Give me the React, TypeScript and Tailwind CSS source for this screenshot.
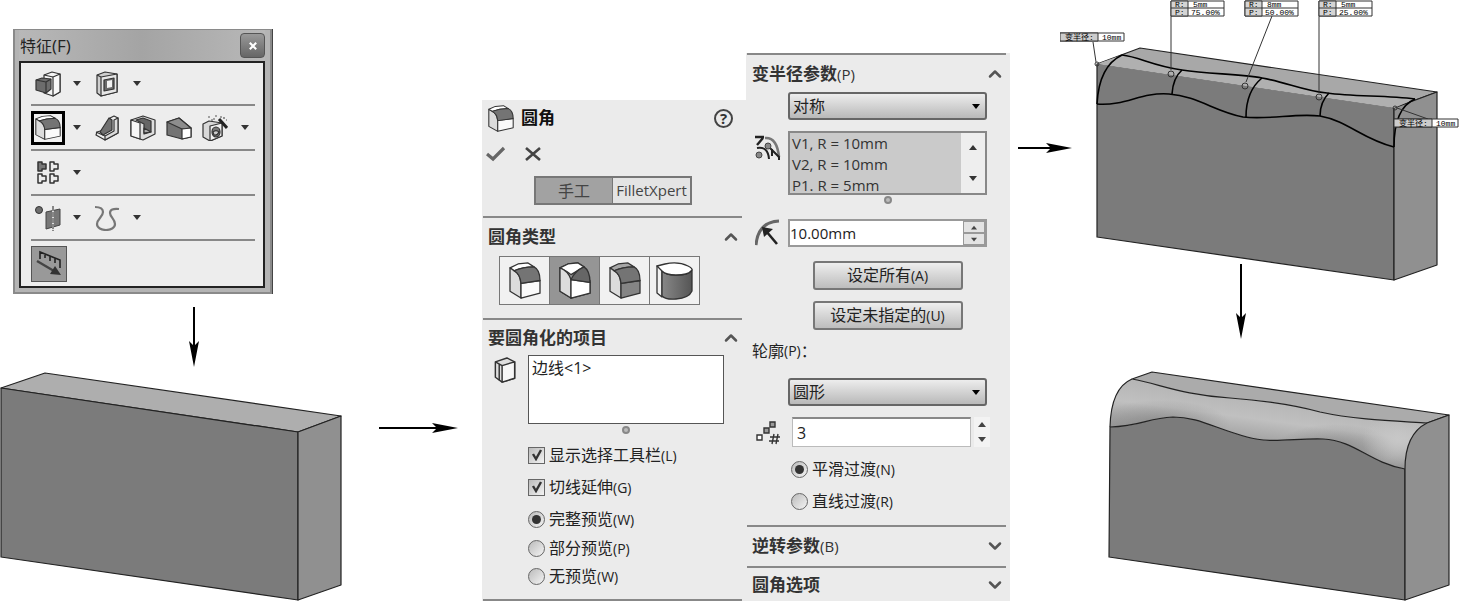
import React, { useState } from 'react';
import { ChevronDown, ChevronUp } from 'lucide-react';

type FilletVariant = 'constant' | 'variable' | 'face' | 'full';

function Caret({ up = false, className = '' }: { up?: boolean; className?: string }) {
  return (
    <svg viewBox="0 0 8 5" className={`h-[5px] w-2 ${className}`} aria-hidden="true">
      <path d={up ? 'M0 5H8L4 0Z' : 'M0 0H8L4 5Z'} fill="currentColor" />
    </svg>
  );
}

function FilletIcon({ variant = 'constant', className }: { variant?: FilletVariant; className: string }) {
  if (variant === 'full') {
    return (
      <svg viewBox="0 0 38 38" className={className} aria-hidden="true">
        <g stroke="#333" strokeWidth="1.3" strokeLinejoin="round">
          <path d="M1 4L6 6V35L1 31Z" fill="#f2f2f2" />
          <path d="M6 9V34Q10 38 20 37Q33 36 36 29V8Q32 14 20 13Q10 13 6 9Z" fill="url(#cylinder)" />
          <path d="M6 9L1 4L9 2Q22-1 32 4Q38 7 35 9Q32 13 20 13Q10 13 6 9Z" fill="#fff" />
        </g>
      </svg>
    );
  }
  return (
    <svg viewBox="0 0 32 38" className={className} preserveAspectRatio="none" aria-hidden="true">
      <g stroke="#333" strokeWidth="1.3" strokeLinejoin="round">
        <path d="M1 6L9 2L19 1L25 5Q14 5 5 9Z" fill={variant === 'face' ? '#a6a6a6' : '#fff'} />
        <path d="M1 6L5 9Q11 12 12 22V37L1 30Z" fill="#dcdcdc" />
        <path d="M12 22L31 19V32L12 37Z" fill={variant === 'face' ? '#858585' : '#fafafa'} />
        {variant === 'variable' ? (
          <>
            <path d="M1 6L9 2L19 1L25 5L12 13Q9 10 1 6Z" fill="#fff" />
            <path d="M1 6Q9 9 12 18V37L1 30Z" fill="#dcdcdc" />
            <path d="M12 18L31 21V32L12 37Z" fill="#fff" />
            <path d="M12 18Q16 9 25 5Q31 9 31 21Z" fill="#666" />
          </>
        ) : (
          <path d="M5 9Q11 12 12 22L31 19Q31 8 25 5Q14 5 5 9Z" fill="#747474" />
        )}
      </g>
    </svg>
  );
}

function BoxIcon({ className }: { className: string }) {
  return (
    <svg viewBox="0 0 24 28" className={className} aria-hidden="true">
      <g fill="#dedede" stroke="#333" strokeWidth="1.5" strokeLinejoin="round">
        <path d="M2 5L14 1L22 5V22L9 26L2 21Z" />
        <path d="M9 9L22 5V22L9 26Z" fill="#f6f6f6" />
        <path d="M2 5L9 9M6 7V24" fill="none" />
      </g>
    </svg>
  );
}

const iconClass = 'size-[26px]';
const outline = { stroke: '#333', strokeWidth: 1.2, strokeLinejoin: 'round' as const };

const ExtrudeIcon = () => (
  <svg viewBox="0 0 26 26" className={iconClass} aria-hidden="true">
    <g {...outline}>
      <path d="M9 4L17 1L25 3V21L18 25L9 22Z" fill="#f4f4f4" />
      <path d="M18 6L25 3V21L18 25Z" fill="#f8f8f8" />
      <path d="M9 4L18 6" fill="none" />
      <path d="M1 9L7 7L16 8V18L11 22L1 19Z" fill="#6c6c6c" />
      <path d="M1 9L11 11V22M11 11L16 8" fill="none" />
    </g>
  </svg>
);

const CutIcon = () => (
  <svg viewBox="0 0 26 26" className={iconClass} aria-hidden="true">
    <g {...outline}>
      <path d="M3 4L11 1L23 3V21L7 25L3 22Z" fill="#cfcfcf" />
      <path d="M7 6L23 3V21L7 25Z" fill="#e6e6e6" />
      <path d="M3 4L7 6" fill="none" />
      <path d="M10 9L20 7V18L10 20Z" fill="#6a6a6a" />
    </g>
    <path d="M13 10L18 9V16L13 17Z" fill="#f3f3f3" />
  </svg>
);

const RibIcon = () => (
  <svg viewBox="0 0 26 26" className={iconClass} aria-hidden="true">
    <g {...outline}>
      <path d="M16 3L20 1L24 3V18L11 25L2 20L3 17L16 13Z" fill="#eee" />
      <path d="M20 5L24 3V18L11 25V21L20 16Z" fill="#dcdcdc" />
      <path d="M6 17L15 3L18 5V15L9 20Z" fill="#707070" />
      <path d="M2 17L11 21" fill="none" />
    </g>
  </svg>
);

const ShellIcon = () => (
  <svg viewBox="0 0 26 26" className={iconClass} aria-hidden="true">
    <g {...outline}>
      <path d="M1 5L13 1L25 5V19L13 25L1 21Z" fill="#dedede" />
      <path d="M1 5L10 8V24L1 21Z" fill="#f6f6f6" />
      <path d="M6 5L13 3L21 6V17L14 19V9Z" fill="#666" />
      <path d="M14 18V13L21 17Z" fill="#aaa" />
    </g>
  </svg>
);

const DraftIcon = () => (
  <svg viewBox="0 0 26 26" className={iconClass} aria-hidden="true">
    <g {...outline}>
      <path d="M1 7L13 3L25 13V22L16 24L1 20Z" fill="#747474" />
      <path d="M1 7L13 3L25 13L16 14Z" fill="#8d8d8d" />
      <path d="M16 14L25 13V22L16 24Z" fill="#fff" />
    </g>
  </svg>
);

const HoleWizardIcon = () => (
  <svg viewBox="0 0 26 26" className={iconClass} aria-hidden="true">
    <g {...outline}>
      <path d="M1 9L7 6L20 8V21L8 26L1 22Z" fill="#d8d8d8" />
      <path d="M8 11L20 8V21L8 26Z" fill="#f1f1f1" />
      <ellipse cx="14" cy="17" rx="4" ry="5" fill="#777" />
      <path d="M11 17Q14 14 17 17Q15 21 12 20Z" fill="#ccc" />
    </g>
    <path d="M17 4L25 13" stroke="#222" strokeWidth="3" />
    <path d="M6 2H8M11 4H13M13 1H15M18 2H20M22 2V4M9 5H11M24 5H25" stroke="#555" strokeWidth="1.2" />
  </svg>
);

const PatternIcon = () => (
  <svg viewBox="0 0 26 26" className={iconClass} aria-hidden="true">
    <g stroke="#333" strokeWidth="1.5" strokeLinejoin="round" fill="none">
      <path d="M3 2H7V4H11V9H7V11H3Z" fill="#777" />
      <path d="M15 2H19V4H23V9H19V11H15Z" />
      <path d="M3 14H7V16H11V21H7V23H3Z" />
      <path d="M15 14H19V16H23V21H19V23H15Z" />
    </g>
  </svg>
);

const ReferenceIcon = () => (
  <svg viewBox="0 0 26 26" className={iconClass} aria-hidden="true">
    <circle cx="4" cy="5" r="3.5" fill="#6d6d6d" stroke="#333" />
    <path d="M11 7L25 4V20L11 24Z" fill="#777" stroke="#444" />
    <path d="M18 1V26" stroke="#ddd" strokeWidth="2" />
    <path d="M18 1V26" stroke="#333" strokeDasharray="5 1" />
  </svg>
);

const CurveIcon = () => (
  <svg viewBox="0 0 26 26" className={iconClass} aria-hidden="true">
    <path
      d="M1 2Q9 2 9 7C9 12 3 14 3 19C3 27 21 27 21 19C21 14 16 12 16 8Q16 3 25 4"
      fill="none"
      stroke="#777"
      strokeWidth="2.2"
    />
  </svg>
);

const MeasureIcon = () => (
  <svg viewBox="0 0 34 34" className="size-[34px]" aria-hidden="true">
    <path d="M8 12V5L28 13V21M13 11V7M18 14V9M23 16V11" fill="none" stroke="#222" strokeWidth="1.6" />
    <path d="M5 14L22 24" stroke="#444" strokeWidth="2.4" />
    <path d="M18 27L29 28L23 19Z" fill="#333" />
  </svg>
);

function ToolButton({ label, selected = false, children }: { label: string; selected?: boolean; children: React.ReactNode }) {
  return (
    <button
      type="button"
      aria-label={label}
      className={
        selected
          ? 'flex size-[34px] shrink-0 items-center justify-center border-[3px] border-black bg-[#f2f2f2]'
          : 'flex w-9 shrink-0 items-center justify-center first:w-[34px]'
      }
    >
      {children}
    </button>
  );
}

function MoreButton({ label }: { label: string }) {
  return (
    <button type="button" aria-label={label} className="flex w-6 shrink-0 items-center justify-center text-[#333]">
      <Caret />
    </button>
  );
}

function FeaturesToolbar() {
  const row = 'flex h-[45px] items-center border-b-2 border-[#888]';
  return (
    <section className="ml-[13px] w-[259px] border-x-2 border-b-2 border-t border-[#8a8a8a] bg-[#b4b4b4] pb-1 pl-1 pr-[5px] shadow-[1px_0_0_#444]">
      <header className="flex h-[31px] items-center justify-between bg-gradient-to-r from-[#b8b8b8] via-[#a4a4a4] to-[#b8b8b8] pl-px">
        <h2 className="text-base text-[#222]">
          特征<span className="text-[17px]">(F)</span>
        </h2>
        <button
          type="button"
          aria-label="关闭"
          className="flex h-[25px] w-[25px] items-center justify-center rounded-sm border border-[#555] bg-gradient-to-b from-[#999] to-[#666] text-white"
        >
          <svg viewBox="0 0 10 10" className="size-2" aria-hidden="true">
            <path d="M1 1L9 9M9 1L1 9" stroke="currentColor" strokeWidth="2.6" />
          </svg>
        </button>
      </header>
      <div className="border-2 border-[#222] bg-[#ededed] pl-[10px] pr-2">
        <div className="flex h-[43px] items-center border-b-2 border-[#888]">
          <ToolButton label="拉伸凸台"><ExtrudeIcon /></ToolButton>
          <MoreButton label="更多凸台" />
          <ToolButton label="拉伸切除"><CutIcon /></ToolButton>
          <MoreButton label="更多切除" />
        </div>
        <div className={row}>
          <ToolButton label="圆角" selected><FilletIcon className="h-[25px] w-[26px]" /></ToolButton>
          <MoreButton label="更多圆角" />
          <ToolButton label="筋"><RibIcon /></ToolButton>
          <ToolButton label="抽壳"><ShellIcon /></ToolButton>
          <ToolButton label="拔模"><DraftIcon /></ToolButton>
          <ToolButton label="异型孔向导"><HoleWizardIcon /></ToolButton>
          <MoreButton label="更多孔" />
        </div>
        <div className={row}>
          <ToolButton label="阵列"><PatternIcon /></ToolButton>
          <MoreButton label="更多阵列" />
        </div>
        <div className={row}>
          <ToolButton label="参考几何体"><ReferenceIcon /></ToolButton>
          <MoreButton label="更多参考几何体" />
          <ToolButton label="曲线"><CurveIcon /></ToolButton>
          <MoreButton label="更多曲线" />
        </div>
        <div className="flex h-[45px] items-center">
          <button type="button" aria-label="Instant3D" className="border border-[#555] bg-[#999]">
            <MeasureIcon />
          </button>
        </div>
      </div>
    </section>
  );
}

function SectionTitle({ title, hotkey, open = true, className = 'h-[38px]' }: { title: string; hotkey?: string; open?: boolean; className?: string }) {
  const Icon = open ? ChevronUp : ChevronDown;
  return (
    <div className={`flex items-center justify-between pl-[5px] pr-px ${className}`}>
      <h3 className="text-[17px] font-bold text-[#333]">
        {title}
        {hotkey && <span className="text-[15px] font-medium">({hotkey})</span>}
      </h3>
      <button type="button" aria-label={title} className="text-[#555]">
        <Icon className="size-5" strokeWidth={3} />
      </button>
    </div>
  );
}

type ChoiceProps = {
  type: 'checkbox' | 'radio';
  name: string;
  label: string;
  hotkey: string;
  defaultChecked?: boolean;
  className?: string;
};

function Choice({ type, name, label, hotkey, defaultChecked, className = 'h-8' }: ChoiceProps) {
  return (
    <label className={`flex items-center gap-1 text-base text-[#222] ${className}`}>
      <span className="grid size-[17px] place-items-center">
        <input
          type={type}
          name={name}
          defaultChecked={defaultChecked}
          className={`peer col-start-1 row-start-1 size-[17px] appearance-none border border-[#666] bg-gradient-to-br from-[#bbb] to-[#f4f4f4] ${
            type === 'radio' ? 'rounded-full' : ''
          }`}
        />
        {type === 'radio' ? (
          <span className="pointer-events-none col-start-1 row-start-1 hidden size-[9px] rounded-full bg-[#333] peer-checked:block" />
        ) : (
          <svg viewBox="0 0 12 12" className="pointer-events-none col-start-1 row-start-1 hidden size-3 peer-checked:block" aria-hidden="true">
            <path d="M2 5L5 10L10 1" fill="none" stroke="#333" strokeWidth="2.4" />
          </svg>
        )}
      </span>
      <span>
        {label}
        <span className="text-sm">({hotkey})</span>
      </span>
    </label>
  );
}

function ComboBox({ label, value }: { label: string; value: string }) {
  return (
    <div className="ml-[41px] mr-[19px] grid items-center">
      <select
        aria-label={label}
        className="col-start-1 row-start-1 h-7 w-full appearance-none rounded-[3px] border-2 border-[#666] bg-gradient-to-b from-[#ededed] to-[#b9b9b9] pl-[3px] text-base text-[#222]"
      >
        <option>{value}</option>
      </select>
      <Caret className="pointer-events-none col-start-1 row-start-1 mr-[6px] w-[10px] justify-self-end text-black" />
    </div>
  );
}

function Grip() {
  return <span className="mx-auto block size-2 rounded-full border-2 border-[#888] bg-[#bbb]" />;
}

const filletTypes: { variant: FilletVariant; label: string }[] = [
  { variant: 'constant', label: '恒定大小圆角' },
  { variant: 'variable', label: '变量大小圆角' },
  { variant: 'face', label: '面圆角' },
  { variant: 'full', label: '完整圆角' },
];

function FilletPanel() {
  const [selected, setSelected] = useState<FilletVariant>('variable');

  return (
    <section className="mt-[100px] bg-[#ebebeb] pl-px pr-1">
      <header className="flex h-9 items-center pl-[5px] pr-[9px]">
        <FilletIcon className="h-[27px] w-[26px]" />
        <h2 className="ml-[7px] grow text-[17px] font-bold text-[#111]">圆角</h2>
        <button
          type="button"
          aria-label="帮助"
          className="flex size-[19px] items-center justify-center rounded-full border-2 border-[#444] text-[15px] font-bold leading-none text-[#333]"
        >
          ?
        </button>
      </header>
      <div className="flex h-9 items-center gap-[19px] pl-[3px]">
        <button type="button" aria-label="确定">
          <svg viewBox="0 0 20 16" className="h-4 w-5" aria-hidden="true">
            <path d="M1 8L7 13L18 2" fill="none" stroke="#666" strokeWidth="3.2" />
          </svg>
        </button>
        <button type="button" aria-label="取消">
          <svg viewBox="0 0 16 16" className="size-4" aria-hidden="true">
            <path d="M1 2L15 14M15 2L1 14" stroke="#444" strokeWidth="2.6" />
          </svg>
        </button>
      </div>
      <div className="ml-[51px] mr-[50px] mt-1 grid h-[29px] grid-cols-2 border-2 border-[#777]">
        <button type="button" className="border-r border-[#777] bg-[#a2a2a2] text-base leading-none text-[#444]">手工</button>
        <button type="button" className="bg-[#e4e4e4] text-[15px] leading-none text-[#444]">FilletXpert</button>
      </div>

      <div className="mt-[11px] border-t-2 border-[#888]">
        <SectionTitle title="圆角类型" />
        <div className="ml-4 mr-[42px] grid h-[49px] grid-cols-4 border-l border-[#777]">
          {filletTypes.map(({ variant, label }) => (
            <button
              key={variant}
              type="button"
              aria-label={label}
              onClick={() => setSelected(variant)}
              className={`flex items-center justify-center border-y border-r border-[#777] ${
                variant === selected ? 'bg-[#959595]' : 'bg-[#f1f1f1]'
              }`}
            >
              <FilletIcon variant={variant} className={variant === 'full' ? 'h-[38px] w-[38px]' : 'h-[37px] w-8'} />
            </button>
          ))}
        </div>
      </div>

      <div className="mt-[13px] border-b-2 border-t-2 border-[#888] pb-2">
        <SectionTitle title="要圆角化的项目" className="h-[35px]" />
        <div className="flex items-start gap-[11px] pl-[10px] pr-[18px]">
          <BoxIcon className="mt-[2px] h-[27px] w-6" />
          <ul aria-label="边线、面、特征和环" className="h-[69px] grow border border-[#555] bg-white pl-[3px] text-base text-[#222]">
            <li>边线&lt;1&gt;</li>
          </ul>
        </div>
        <div className="ml-[44px] mr-[18px] mt-[2px]"><Grip /></div>
        <div className="ml-[45px] mt-[5px]">
          <Choice type="checkbox" name="toolbar" label="显示选择工具栏" hotkey="L" defaultChecked />
          <Choice type="checkbox" name="tangent" label="切线延伸" hotkey="G" defaultChecked />
          <Choice type="radio" name="preview" label="完整预览" hotkey="W" defaultChecked />
          <Choice type="radio" name="preview" label="部分预览" hotkey="P" className="h-[26px]" />
          <Choice type="radio" name="preview" label="无预览" hotkey="W" className="h-[30px]" />
        </div>
      </div>
    </section>
  );
}

function RadiusPanel() {
  const actionButton =
    'mx-auto block h-[29px] w-[150px] rounded-[3px] border-2 border-[#777] bg-gradient-to-b from-[#eee] to-[#bdbdbd] text-base leading-none text-[#222]';
  return (
    <section className="mt-[53px] bg-[#ebebeb] pl-px pr-1">
      <div className="border-t-2 border-[#888]">
        <SectionTitle title="变半径参数" hotkey="P" />
        <div className="-mt-px"><ComboBox label="对称方式" value="对称" /></div>
        <div className="mt-[11px] flex items-start pl-2 pr-[19px]">
          <svg viewBox="0 0 26 28" className="mr-[7px] mt-1 h-7 w-[26px] shrink-0" aria-hidden="true">
            <path d="M10 3Q22 2 24 22" fill="none" stroke="#777" strokeWidth="2.6" />
            <path d="M0 2H9M8 3L2 10" fill="none" stroke="#222" strokeWidth="2.4" />
            <path d="M2 13Q13 11 14 24M15 13L24 22V25" fill="none" stroke="#222" strokeWidth="2" />
            <path d="M17 14V21" stroke="#222" strokeWidth="2" />
            <circle cx="13" cy="11" r="3" fill="#888" stroke="#444" />
            <circle cx="4" cy="20" r="3" fill="#888" stroke="#444" />
          </svg>
          <div className="flex h-[64px] grow overflow-hidden border-2 border-[#888] bg-[#cacaca]">
            <ul aria-label="附加的半径" className="grow pl-[2px] text-[15px] leading-[21px] text-[#333]">
              <li>V1, R = 10mm</li>
              <li>V2, R = 10mm</li>
              <li>P1. R = 5mm</li>
            </ul>
            <div className="flex w-6 flex-col items-center justify-between bg-[#eee] py-3 text-[#333]">
              <button type="button" aria-label="向上滚动" className="flex"><Caret up /></button>
              <button type="button" aria-label="向下滚动" className="flex"><Caret /></button>
            </div>
          </div>
        </div>
        <div className="ml-[41px] mr-[19px] mt-px"><Grip /></div>
        <div className="mt-[15px] flex items-center pl-2 pr-[19px]">
          <svg viewBox="0 0 26 28" className="mr-[7px] h-7 w-[26px] shrink-0" aria-hidden="true">
            <path d="M1 26Q3 3 24 2" fill="none" stroke="#666" strokeWidth="3" />
            <path d="M22 25L11 12" stroke="#222" strokeWidth="2.6" />
            <path d="M7 8L18 10L9 18Z" fill="#222" />
          </svg>
          <div className="flex h-7 min-w-0 grow border-2 border-[#999] bg-white">
            <input aria-label="半径" defaultValue="10.00mm" className="min-w-0 grow text-[15px] text-[#222]" />
            <div className="grid w-[22px] shrink-0 grid-rows-2 text-[#444]">
              <button type="button" aria-label="增大半径" className="flex items-center justify-center border border-[#999] bg-[#e3e3e3]"><Caret up className="w-[6px]" /></button>
              <button type="button" aria-label="减小半径" className="flex items-center justify-center border border-[#999] bg-[#e3e3e3]"><Caret className="w-[6px]" /></button>
            </div>
          </div>
        </div>
        <div className="ml-[22px] mt-[14px]">
          <button type="button" className={actionButton}>设定所有<span className="text-sm">(A)</span></button>
        </div>
        <div className="ml-[22px] mt-[11px]">
          <button type="button" className={actionButton}>设定未指定的<span className="text-sm">(U)</span></button>
        </div>
        <p className="flex h-[42px] items-center pl-[5px] text-base text-[#222]">
          轮廓<span className="text-sm">(P)</span>：
        </p>
        <div className="mt-[6px]"><ComboBox label="轮廓" value="圆形" /></div>
        <div className="mt-[11px] flex items-center pl-[9px] pr-4">
          <svg viewBox="0 0 24 26" className="mr-3 h-[26px] w-6 shrink-0" aria-hidden="true">
            <g stroke="#333" strokeWidth="1.4">
              <path d="M1 16H6V21H1Z" fill="#fff" />
              <path d="M8 9H13V14H8Z" fill="#999" />
              <path d="M14 3H19V8H14Z" fill="#999" />
              <path d="M18 15L16 25M22 15L20 25M14 18H24M13 22H23" fill="none" />
            </g>
          </svg>
          <input aria-label="实例数" defaultValue="3" className="h-[30px] min-w-0 grow border border-t-2 border-[#bbb] border-t-[#888] bg-white pl-1 text-base text-[#222]" />
          <div className="ml-[3px] grid h-[30px] w-4 shrink-0 grid-rows-2 bg-[#f3f3f3] text-[#444]">
            <button type="button" aria-label="增加实例数" className="flex items-center justify-center"><Caret up /></button>
            <button type="button" aria-label="减少实例数" className="flex items-center justify-center"><Caret /></button>
          </div>
        </div>
        <div className="ml-[44px] pb-2 pt-[6px]">
          <Choice type="radio" name="transition" label="平滑过渡" hotkey="N" defaultChecked />
          <Choice type="radio" name="transition" label="直线过渡" hotkey="R" />
        </div>
      </div>
      <div className="border-t-2 border-[#888] pb-[2px]">
        <SectionTitle title="逆转参数" hotkey="B" open={false} className="h-[37px]" />
      </div>
      <div className="border-t-2 border-[#888]">
        <SectionTitle title="圆角选项" open={false} className="h-[33px]" />
      </div>
    </section>
  );
}

function RightArrow({ length }: { length: number }) {
  return (
    <svg width={length} height="12" className="shrink-0 overflow-visible" aria-hidden="true">
      <path d={`M0 6H${length - 20}`} stroke="#000" strokeWidth="2" />
      <path d={`M${length} 6L${length - 26} 1L${length - 21} 6L${length - 26} 11Z`} />
    </svg>
  );
}

function SolidBlock() {
  return (
    <svg viewBox="0 372 342 229" className="mt-[5px] w-full" role="img" aria-label="长方体">
      <g stroke="#222" strokeWidth="1.2" strokeLinejoin="round">
        <path d="M1 388L45 373L341 416L298 432Z" fill="#aeaeae" />
        <path d="M1 388L298 432V600L1 557Z" fill="#7b7b7b" />
        <path d="M298 432L341 416V585L298 600Z" fill="#909090" />
      </g>
    </svg>
  );
}

const radiusPoints = [
  { x: 1171, radius: '5mm', position: '75.00%', target: 'M1171 16V70' },
  { x: 1245, radius: '8mm', position: '50.00%', target: 'M1272 16L1246 82' },
  { x: 1319, radius: '5mm', position: '25.00%', target: 'M1319 16V93' },
];

const vertexLabels = [
  { x: 1060, y: 33 },
  { x: 1394, y: 119 },
];

function Results() {
  return (
    <svg viewBox="1060 0 399 601" className="w-full" role="img" aria-label="变半径圆角预览与结果">
      <defs>
        <linearGradient id="blend" gradientUnits="userSpaceOnUse" x1="1268" y1="396" x2="1260" y2="456">
          <stop offset="0" stopColor="#b4b4b4" />
          <stop offset="0.4" stopColor="#c0c0c0" />
          <stop offset="1" stopColor="#8e8e8e" />
        </linearGradient>
        <radialGradient id="dip">
          <stop offset="0" stopColor="#777" stopOpacity="0.6" />
          <stop offset="1" stopColor="#777" stopOpacity="0" />
        </radialGradient>
        <radialGradient id="glow">
          <stop offset="0" stopColor="#c8c8c8" stopOpacity="0.9" />
          <stop offset="1" stopColor="#c8c8c8" stopOpacity="0" />
        </radialGradient>
        <clipPath id="blendArea">
          <path d="M1110 427Q1111 388 1132 379C1160 384 1182 395 1230 398C1270 401 1294 405 1320 412C1356 420 1395 421 1427 423Q1405 434 1405 469C1368 462 1356 441 1323 439C1295 438 1270 444 1247 437C1214 428 1198 417 1173 417C1147 418 1142 426 1110 427Z" />
        </clipPath>
        <linearGradient id="cylinder">
          <stop offset="0" stopColor="#888" />
          <stop offset="1" stopColor="#555" />
        </linearGradient>
      </defs>

      {/* Block with the preview curves */}
      <g stroke="#222" strokeWidth="1.2" strokeLinejoin="round">
        <path d="M1097 64L1140 48L1437 92L1394 108Z" fill="#a8a8a8" />
        <path d="M1097 64L1394 108V280L1097 237Z" fill="#7b7b7b" stroke="none" />
        <path d="M1097 64V237L1394 280V108" fill="none" />
        <path d="M1394 108L1437 92V265L1394 280Z" fill="#909090" />
      </g>
      <path
        d="M1097 64L1122 55C1140 57 1150 65 1182 70C1209 74 1240 74 1262 78C1286 82 1304 91 1327 93C1354 97 1386 95 1415 99L1394 108Z"
        fill="#b0b0b0"
      />
      <g fill="none" stroke="#000" strokeWidth="1.6">
        <path d="M1122 55C1140 57 1150 65 1182 70C1209 74 1240 74 1262 78C1286 82 1304 91 1327 93C1354 97 1386 95 1415 99" />
        <path d="M1097 104C1127 106 1140 92 1169 94C1197 96 1216 112 1243 117C1270 120 1295 113 1320 116C1348 121 1362 139 1394 147" />
        <path d="M1097 104Q1099 66 1122 55M1172 94Q1173 78 1182 70M1246 117Q1246 91 1262 78M1320 116Q1320 102 1329 93M1394 147Q1394 108 1415 99" />
      </g>
      <g fill="none" stroke="#333" strokeWidth="1">
        {radiusPoints.map((point) => (
          <path key={point.x} d={point.target} />
        ))}
        <path d="M1093 42L1096 62M1397 108L1428 119" />
        <circle cx="1171" cy="74" r="3" />
        <circle cx="1245" cy="86" r="3" />
        <circle cx="1319" cy="97" r="3" />
        <circle cx="1097" cy="64" r="2" />
        <circle cx="1395" cy="108" r="2" />
      </g>

      {/* Radius and position callouts */}
      {radiusPoints.map((point) => (
        <g key={point.x} className="font-['Liberation_Mono',monospace] text-[8px]">
          <path d={`M${point.x} 1h53v15h-53z`} fill="#fff" stroke="#333" />
          <path d={`M${point.x} 1h17v15h-17z`} fill="#d4d4d4" stroke="#333" />
          <path d={`M${point.x} 8h53`} stroke="#333" />
          <text x={point.x + 4} y="7">R:</text>
          <text x={point.x + 22} y="7">{point.radius}</text>
          <text x={point.x + 4} y="15">P:</text>
          <text x={point.x + 20} y="15">{point.position}</text>
        </g>
      ))}
      {vertexLabels.map(({ x, y }) => (
        <g key={x} className="font-['Liberation_Mono','Noto_Sans_CJK_SC',monospace] text-[8px]">
          <path d={`M${x} ${y}h64v8h-64z`} fill="#fff" stroke="#333" />
          <path d={`M${x} ${y}h38v8h-38z`} fill="#ccc" stroke="#333" />
          <text x={x + 5} y={y + 7}>变半径:</text>
          <text x={x + 42} y={y + 7}>10mm</text>
        </g>
      ))}

      <path d="M1241 264V320" stroke="#000" strokeWidth="2" />
      <path d="M1241 339L1236 313L1241 318L1246 313Z" />

      {/* Finished fillet */}
      <g clipPath="url(#blendArea)">
        <path d="M1105 370H1430V475H1105Z" fill="url(#blend)" />
        <ellipse cx="1160" cy="424" rx="70" ry="24" fill="url(#dip)" />
        <ellipse cx="1335" cy="448" rx="60" ry="24" fill="url(#dip)" />
        <ellipse cx="1398" cy="440" rx="36" ry="26" fill="url(#glow)" />
      </g>
      <g stroke="#222" strokeWidth="1.2" strokeLinejoin="round">
        <path d="M1110 427Q1111 388 1132 379" fill="none" />
        <path d="M1132 379L1152 372L1449 415L1427 423C1395 421 1356 420 1320 412C1294 405 1270 401 1230 398C1182 395 1160 384 1132 379Z" fill="#ababab" />
        <path d="M1110 427C1142 426 1147 418 1173 417C1198 417 1214 428 1247 437C1270 444 1295 438 1323 439C1356 441 1368 462 1405 469V600L1109 557Z" fill="#7b7b7b" />
        <path d="M1405 469Q1405 434 1427 423L1449 415V585L1405 600Z" fill="#909090" />
      </g>
    </svg>
  );
}

export default function App() {
  return (
    <main className="grid grid-cols-[342px_minmax(0,140fr)_528px_minmax(0,50fr)_399px] items-start bg-white font-['Open_Sans','Noto_Sans_CJK_SC',sans-serif]">
      <div className="pt-[29px]">
        <FeaturesToolbar />
        <svg width="12" height="60" className="ml-[188px] mt-[13px] block" aria-hidden="true">
          <path d="M6 0V42" stroke="#000" strokeWidth="2" />
          <path d="M6 60L1 34L6 39L11 34Z" />
        </svg>
        <SolidBlock />
      </div>
      <div className="flex justify-center pl-3 pt-[422px]">
        <RightArrow length={79} />
      </div>
      <div className="grid grid-cols-2 items-start">
        <FilletPanel />
        <RadiusPanel />
      </div>
      <div className="flex pl-[8px] pt-[142px]">
        <RightArrow length={54} />
      </div>
      <Results />
    </main>
  );
}
